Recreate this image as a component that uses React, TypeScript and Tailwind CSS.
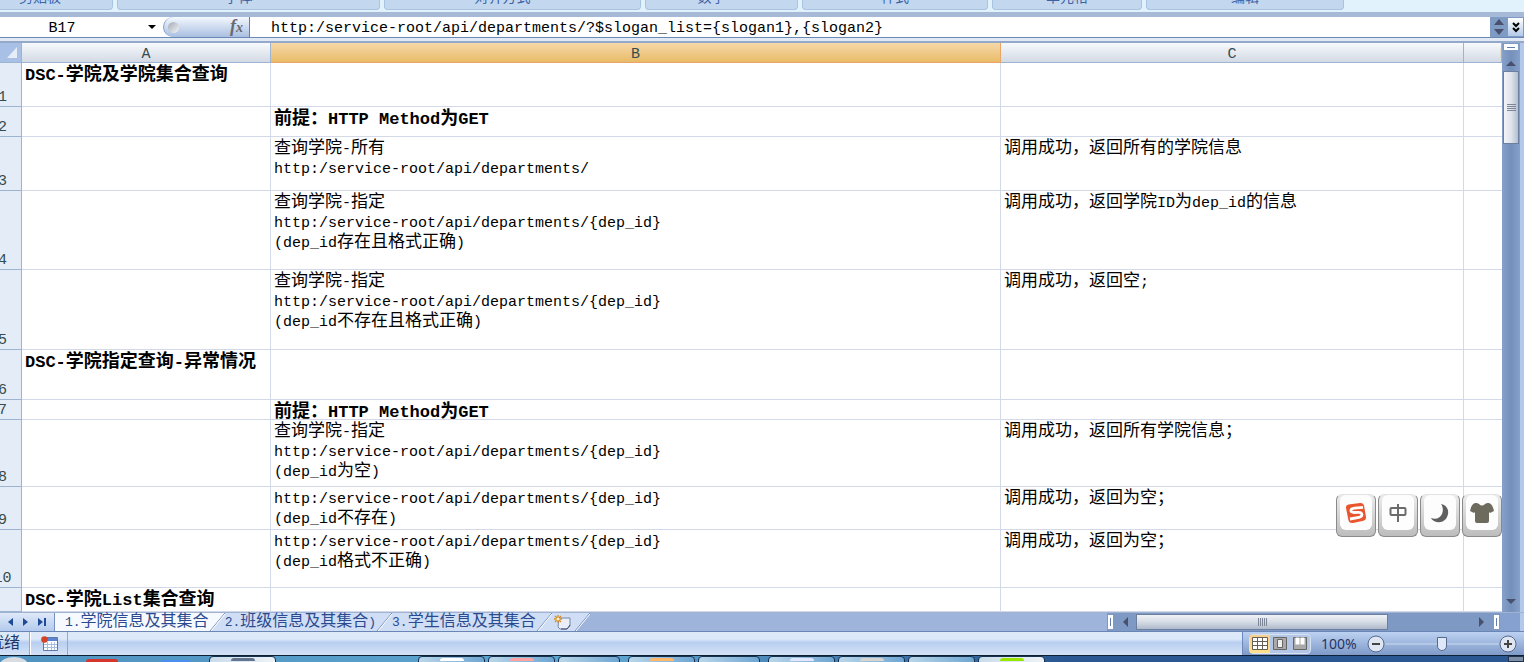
import { clsx } from "clsx";
import { useState } from "react";

interface SheetRow {
  id: number;
  height: string;
  a?: string;
  b?: string[];
  c?: string;
  bold?: boolean;
}

const URL_ALL = "http:/service-root/api/departments/";
const URL_BY_ID = "http:/service-root/api/departments/{dep_id}";

const ROWS: SheetRow[] = [
  { id: 1, height: "h-[43px]", a: "DSC-学院及学院集合查询", bold: true },
  { id: 2, height: "h-[29px]", b: ["前提：HTTP Method为GET"], bold: true },
  {
    id: 3,
    height: "h-[53px]",
    b: ["查询学院-所有", URL_ALL],
    c: "调用成功，返回所有的学院信息",
  },
  {
    id: 4,
    height: "h-[78px]",
    b: ["查询学院-指定", URL_BY_ID, "(dep_id存在且格式正确)"],
    c: "调用成功，返回学院ID为dep_id的信息",
  },
  {
    id: 5,
    height: "h-[79px]",
    b: ["查询学院-指定", URL_BY_ID, "(dep_id不存在且格式正确)"],
    c: "调用成功，返回空;",
  },
  { id: 6, height: "h-[49px]", a: "DSC-学院指定查询-异常情况", bold: true },
  { id: 7, height: "h-[19px]", b: ["前提：HTTP Method为GET"], bold: true },
  {
    id: 8,
    height: "h-[66px]",
    b: ["查询学院-指定", URL_BY_ID, "(dep_id为空)"],
    c: "调用成功，返回所有学院信息；",
  },
  {
    id: 9,
    height: "h-[42px]",
    b: [URL_BY_ID, "(dep_id不存在)"],
    c: "调用成功，返回为空；",
  },
  {
    id: 10,
    height: "h-[57px]",
    b: [URL_BY_ID, "(dep_id格式不正确)"],
    c: "调用成功，返回为空；",
  },
  { id: 11, height: "h-[23px]", a: "DSC-学院List集合查询", bold: true },
];

const RIBBON_GROUPS = [
  { name: "剪贴板", box: "w-[113px] pr-8 border-l-0 rounded-bl-none" },
  { name: "字体", box: "w-[263px] pr-5" },
  { name: "对齐方式", box: "w-[257px] pr-5" },
  { name: "数字", box: "w-[153px] pr-5" },
  { name: "样式", box: "w-[186px]" },
  { name: "单元格", box: "w-[150px]" },
  { name: "编辑", box: "w-[198px]" },
];

const SHEETS = ["1.学院信息及其集合", "2.班级信息及其集合)", "3.学生信息及其集合"];

const TASKS = [
  { id: "notes", box: "w-[67px] ml-[209px]", mark: "bg-slate-500" },
  { id: "browser", box: "w-[67px] ml-[142px]", mark: "bg-white" },
  { id: "media", box: "w-[67px] ml-[3px]", mark: "bg-red-300" },
  { id: "folder", box: "w-[62px] ml-[3px]", mark: "bg-transparent" },
  { id: "draw", box: "w-[67px] ml-[8px]", mark: "bg-orange-300" },
  { id: "files", box: "w-[62px] ml-[3px]", mark: "bg-transparent" },
  { id: "chat", box: "w-[67px] ml-[8px]", mark: "bg-indigo-100" },
  { id: "editor", box: "w-[67px] ml-[3px]", mark: "bg-stone-300" },
  { id: "mail", box: "w-[67px] ml-[3px]", mark: "bg-transparent" },
  { id: "sheet", box: "w-[67px] ml-[3px]", mark: "bg-lime-400", active: true },
];

function Mixed({
  text,
  latin = "text-[15px]",
}: {
  text: string;
  latin?: string;
}) {
  return (
    <>
      {text.split(/([\x20-\x7e]+)/).map((run, i) =>
        i % 2 ? (
          <span className={latin} key={i}>
            {run}
          </span>
        ) : (
          run
        ),
      )}
    </>
  );
}

function Ribbon() {
  return (
    <div className="flex h-3 gap-1 overflow-hidden bg-[#e1f2fd]">
      {RIBBON_GROUPS.map(({ name, box }) => (
        <div
          className={clsx(
            "flex h-[10px] items-end justify-center overflow-hidden rounded-b border border-t-0 border-[#a8c4e0] bg-[#c3d8ef] pb-[3px] text-[14px] leading-4 text-[#3c62a6]",
            box,
          )}
          key={name}
        >
          {name}
        </div>
      ))}
    </div>
  );
}

function FormulaBar() {
  return (
    <div className="flex h-[25px] border-t-[5px] border-[#a6b9d6] bg-white">
      <div className="flex w-[163px] items-center">
        <input
          aria-label="名称框"
          className="w-[124px] min-w-0 bg-transparent pt-1 text-center text-[15px] outline-none"
          defaultValue="B17"
        />
        <button aria-label="名称列表" className="ml-6" type="button">
          <svg className="h-1 w-2" viewBox="0 0 8 4">
            <path d="M0 0h8L4 4z" fill="#000" />
          </svg>
        </button>
      </div>
      <div className="flex w-[87px] items-center justify-between rounded-l-full border-r border-l border-r-[#5f7fae] border-l-[#7f9cc6] bg-linear-to-b from-[#f4f8fd] to-[#a9bfe1] pr-1.5 pl-1">
        <span className="size-[11px] rounded-full bg-linear-to-br from-[#a4abb6] to-[#f3f5f8]" />
        <button
          className="font-['Liberation_Serif',serif] text-[18px] leading-5 font-bold text-[#666a72] italic"
          type="button"
        >
          f<span className="text-[14px]">x</span>
        </button>
      </div>
      <input
        aria-label="编辑栏"
        className="min-w-0 flex-1 bg-transparent pt-1 pl-[21px] text-[15px] outline-none"
        defaultValue="http:/service-root/api/departments/?$slogan_list={slogan1},{slogan2}"
      />
      <div className="flex w-[17px] flex-col items-center justify-center gap-1 bg-[#7e9bc4]">
        <svg className="h-[16px] w-[10px]" viewBox="0 0 10 16">
          <path d="M5 0l5 6H0zM5 16l5-6H0z" fill="#48506e" />
        </svg>
      </div>
      <button
        aria-label="展开编辑栏"
        className="flex w-[17px] items-center justify-center border border-[#7e9bc4] bg-linear-to-b from-white to-[#b3c8e8]"
        type="button"
      >
        <svg className="h-[11px] w-2" fill="none" viewBox="0 0 8 11">
          <path
            d="M1 1l3 3 3-3M1 6l3 3 3-3"
            stroke="#000"
            strokeWidth="2"
          />
        </svg>
      </button>
    </div>
  );
}

function Grid() {
  const header =
    "h-5 overflow-hidden border-r border-b border-[#9cb4cf] bg-linear-to-b from-[#f7f9fc] to-[#d3dae5] p-0 pt-1 text-[15px] leading-[15px] font-normal text-[#364c4e]";
  const cell = "border-r border-b border-[#d3d9e8] p-0 align-top";
  return (
    <table className="w-full flex-1 table-fixed border-separate border-spacing-0 bg-white">
      <colgroup>
        <col className="w-[22px]" />
        <col className="w-[249px]" />
        <col />
        <col className="w-[463px]" />
        <col className="w-[38px]" />
      </colgroup>
      <thead>
        <tr>
          <th className="border-r border-b border-[#9cb4cf] bg-[#a9c0e6] p-0">
            <svg className="ml-[7px] h-[11px] w-[10px]" viewBox="0 0 10 11">
              <path d="M10 0v11H0z" fill="#e6edf7" />
            </svg>
          </th>
          <th className={header}>A</th>
          <th className="h-5 border-r border-b border-[#e9a568] bg-linear-to-b from-[#f6d8a8] to-[#e8bb67] p-0 pt-1 text-[15px] leading-[15px] font-normal text-[#364c4e]">
            B
          </th>
          <th className={header}>C</th>
          <th className={header}>
            <span className="ml-9 block text-left">D</span>
          </th>
        </tr>
      </thead>
      <tbody>
        {ROWS.map(({ id, height, a, b, c, bold }) => {
          const text = bold ? "text-[18px] font-bold" : "text-[17px]";
          const latin = bold ? "text-[17px]" : "text-[15px]";
          const content = clsx(
            "overflow-hidden pt-0.5 pl-[3px] leading-5 whitespace-nowrap",
            height,
            text,
          );
          return (
            <tr key={id}>
              <th className="border-r border-b border-[#9cb4cf] bg-[#e4ecf7] p-0 font-normal">
                <div
                  className={clsx(
                    "-ml-4 flex items-end justify-center text-[15px] leading-4 text-[#364c4e]",
                    height,
                  )}
                >
                  {id < 11 && id}
                </div>
              </th>
              <td className={cell}>
                <div className={content}>
                  {a && <Mixed latin={latin} text={a} />}
                </div>
              </td>
              <td className={cell}>
                <div className={content}>
                  {b?.map((line) => (
                    <p className="h-5" key={line}>
                      <Mixed latin={latin} text={line} />
                    </p>
                  ))}
                </div>
              </td>
              <td className={cell}>
                <div className={content}>
                  {c && <Mixed latin={latin} text={c} />}
                </div>
              </td>
              <td className="border-b border-[#d3d9e8] p-0" />
            </tr>
          );
        })}
      </tbody>
    </table>
  );
}

function VerticalScroll() {
  return (
    <div className="flex w-[22px] flex-col items-center border-r-4 border-[#b3c9ec] bg-linear-to-r from-[#86a0c9] via-[#7490bb] to-[#86a0c9]">
      <span className="flex h-2 w-4 items-center justify-center border border-[#7e9bc4] bg-white">
        <span className="h-px w-2 bg-[#5f7fae]" />
      </span>
      <button aria-label="向上滚动" className="h-5 pt-1" type="button">
        <svg className="h-[5px] w-[10px]" viewBox="0 0 10 5">
          <path d="M5 0l5 5H0z" fill="#48506e" />
        </svg>
      </button>
      <div className="flex h-[73px] w-4 flex-col items-center justify-center gap-px border border-[#6c7f9f] bg-linear-to-r from-[#f2f4f7] via-[#dfe4ec] to-[#b3bfd2]">
        <span className="h-px w-[9px] bg-[#7d8696]" />
        <span className="h-px w-[9px] bg-[#7d8696]" />
        <span className="h-px w-[9px] bg-[#7d8696]" />
        <span className="h-px w-[9px] bg-[#7d8696]" />
      </div>
      <button aria-label="向下滚动" className="mt-auto pb-2" type="button">
        <svg className="h-[5px] w-[10px]" viewBox="0 0 10 5">
          <path d="M0 0h10L5 5z" fill="#48506e" />
        </svg>
      </button>
    </div>
  );
}

function KeyCap({
  label,
  children,
}: {
  label: string;
  children: React.ReactNode;
}) {
  return (
    <button
      aria-label={label}
      className="h-[43px] w-10 rounded-md border border-[#8a8a8a] border-t-[#e2e2e2] bg-linear-to-b from-[#ececec] to-[#bdbdbd] px-[3px] pb-1.5"
      type="button"
    >
      <span className="flex h-full items-center justify-center rounded-md bg-[#fdfdfd]">
        {children}
      </span>
    </button>
  );
}

// 输入法状态栏
function ImeBar() {
  return (
    <div className="absolute right-[22px] bottom-[75px] flex gap-0.5">
      <KeyCap label="输入法">
        <svg className="size-[22px]" fill="none" viewBox="0 0 22 22">
          <path
            d="M1 6q-.5-3 2.500-3.500L15 1q3.500-.5 4 2.500L21 15q.5 3-2.500 3.700L8 21q-4 .5-4.600-3z"
            fill="#e8552f"
          />
          <path
            d="M18 5.300L9.500 6.200C4.500 6.800 5 10.600 9 10.500l4-.2c5-.2 5 4.200 1 5L5 17"
            stroke="#fff"
            strokeWidth="2.800"
          />
        </svg>
      </KeyCap>
      <KeyCap label="中文">
        <svg
          className="size-5"
          fill="none"
          stroke="#6b6b6b"
          strokeWidth="2"
          viewBox="0 0 20 20"
        >
          <rect height="7" rx="1" width="15" x="2.500" y="5" />
          <path d="M10 1v18" />
        </svg>
      </KeyCap>
      <KeyCap label="半角">
        <svg className="size-5" viewBox="0 0 20 20">
          <path
            d="M11 1c5 1 8 5 7 10-1 6-6 9-11 8-3-.5-5-2-6-4 5 2 9 0 11-4 1.500-4 1-7-1-10z"
            fill="#5f5f5f"
          />
        </svg>
      </KeyCap>
      <KeyCap label="皮肤">
        <svg className="h-[21px] w-6" viewBox="0 0 24 21">
          <path
            d="M5 1c2 0 3 0 4 1q3 3 6 0c1-1 2-1 4-1 3 1 4 4 5 8l-4 2-1-1v9q0 2-2 2H7q-2 0-2-2v-9l-1 1-4-2C1 5 2 2 5 1z"
            fill="#6d6b5e"
          />
        </svg>
      </KeyCap>
    </div>
  );
}

// 标签之间的斜边
function Slash({ left, right }: { left: string; right: string }) {
  return (
    <svg className="h-[18px] w-4 shrink-0" viewBox="0 0 16 18">
      <path d="M0 0h16L1 18H0z" fill={left} />
      <path d="M16 0v18H1z" fill={right} />
      <path d="M1 18L16 0" fill="none" stroke="#7690bd" />
      <path d="M2 18L16 1" fill="none" stroke="#fff" />
    </svg>
  );
}

function SheetTabs() {
  const [active, setActive] = useState(0);
  return (
    <div className="flex h-5 border-y border-t-[#a0b3d0] border-b-[#6a86b6] bg-[#9fb4da]">
      <div className="flex w-[55px] items-center gap-[10px] border-r border-[#7690bd] bg-linear-to-b from-[#dfe9f8] to-[#b4caed] pl-2">
        <button aria-label="上一个" type="button">
          <svg className="h-2 w-[5px]" viewBox="0 0 5 8">
            <path d="M5 0v8L0 4z" fill="#1f4a96" />
          </svg>
        </button>
        <button aria-label="下一个" type="button">
          <svg className="h-2 w-[5px]" viewBox="0 0 5 8">
            <path d="M0 0v8l5-4z" fill="#1f4a96" />
          </svg>
        </button>
        <button aria-label="最后一个" type="button">
          <svg className="h-2 w-[8px]" viewBox="0 0 8 8">
            <path d="M0 0v8l5-4zM6 0h2v8H6z" fill="#1f4a96" />
          </svg>
        </button>
      </div>
      {SHEETS.map((name, i) => (
        <div className="flex" key={name}>
          <button
            className={clsx(
              "text-[16px] leading-[18px] whitespace-nowrap text-[#2b4a8f]",
              i === 0 && "pl-[10px]",
              i === active ? "bg-[#f6f9fe]" : "bg-[#cfdef5]",
            )}
            onClick={() => setActive(i)}
            type="button"
          >
            <Mixed latin="text-[13px]" text={name} />
          </button>
          <Slash
            left={i === active ? "#f6f9fe" : "#cfdef5"}
            right={i + 1 === active ? "#f6f9fe" : "#cfdef5"}
          />
        </div>
      ))}
      <button
        aria-label="插入工作表"
        className="flex w-[22px] items-center justify-center bg-[#cfdef5]"
        type="button"
      >
        <svg className="h-[15px] w-[17px]" viewBox="0 0 17 15">
          <path d="M5 3h11v8l-3 3H6l-2-2z" fill="#e9eef8" stroke="#7c87a3" />
          <path d="M16 10l-3 4H7" fill="none" stroke="#3f4c78" />
          <path
            d="M4 0v8M0 4h8M1 1l6 6M7 1L1 7"
            stroke="#d98c22"
            strokeWidth="1.300"
          />
          <circle cx="4" cy="4" fill="#fff3c9" r="1.600" />
        </svg>
      </button>
      <Slash left="#cfdef5" right="#9fb4da" />
      <div className="ml-auto flex w-[417px] items-center bg-[#7e99c3]">
        <span className="flex h-4 w-[7px] items-center justify-center border border-[#7e99c3] bg-white">
          <span className="h-2 w-px bg-[#5f7fae]" />
        </span>
        <button
          aria-label="向左滚动"
          className="flex w-[22px] justify-center"
          type="button"
        >
          <svg className="h-[10px] w-[5px]" viewBox="0 0 5 10">
            <path d="M5 0v10L0 5z" fill="#48506e" />
          </svg>
        </button>
        <div className="flex h-4 w-[252px] items-center justify-center gap-px border border-[#6c7f9f] bg-linear-to-b from-[#f0f2f6] via-[#d6dce5] to-[#aeb9cb]">
          <span className="h-2 w-px bg-[#7d8696]" />
          <span className="h-2 w-px bg-[#7d8696]" />
          <span className="h-2 w-px bg-[#7d8696]" />
          <span className="h-2 w-px bg-[#7d8696]" />
          <span className="h-2 w-px bg-[#7d8696]" />
        </div>
        <button
          aria-label="向右滚动"
          className="ml-auto flex w-[17px] justify-center"
          type="button"
        >
          <svg className="h-[10px] w-[5px]" viewBox="0 0 5 10">
            <path d="M0 0v10l5-5z" fill="#48506e" />
          </svg>
        </button>
        <span className="ml-[3px] flex h-4 w-[7px] items-center justify-center border border-[#7e99c3] bg-white">
          <span className="h-2 w-px bg-[#5f7fae]" />
        </span>
        <span className="h-full w-6 border-r-4 border-[#b3c9ec] bg-[#86a0d0]" />
      </div>
    </div>
  );
}

function StatusBar() {
  const [zoom, setZoom] = useState(100);
  return (
    <div className="flex h-[23px] bg-linear-to-b from-[#dde9f9] from-30% via-[#b9cff0] via-45% to-[#d5e2f6] text-[#1f3566]">
      <div className="flex w-[30px] items-center overflow-hidden border-r border-[#8fa9d4]">
        <span className="-ml-3 text-[16px] leading-5 whitespace-nowrap">
          就绪
        </span>
      </div>
      <button
        aria-label="录制宏"
        className="flex w-[38px] items-center justify-center border-r border-l border-r-[#8fa9d4] border-l-white"
        type="button"
      >
        <svg className="h-[15px] w-[17px]" viewBox="0 0 17 15">
          <path d="M2.500 1.500h14v13h-14z" fill="#fff" stroke="#5f77a8" />
          <path d="M3 2h13v3H3z" fill="#5b83cf" />
          <path
            d="M3 8.500h13M3 11.500h13M6.500 6v8M10.500 6v8M13.500 6v8"
            stroke="#a9bde0"
          />
          <circle cx="3.500" cy="3.500" fill="#d2432a" r="3.300" />
        </svg>
      </button>
      <div className="ml-auto flex w-[282px] items-center border-l border-[#6c89bd] bg-linear-to-b from-[#bdd2f2] to-[#7f9ac8] pl-1.5">
        <div className="flex h-5 w-[62px] rounded-sm border border-[#d7e2f3] bg-[#b3c6e6]">
          <button
            aria-label="普通"
            className="flex flex-1 items-center justify-center bg-linear-to-b from-[#f6cf8f] to-[#ffe08a]"
            type="button"
          >
            <svg className="h-[13px] w-4" fill="none" viewBox="0 0 16 13">
              <path d="M.5.5h15v12H.5z" fill="#fff" stroke="#665f55" />
              <path
                d="M1 4.500h14M1 8.500h14M5.500 1v11M10.500 1v11"
                stroke="#665f55"
              />
            </svg>
          </button>
          <button
            aria-label="页面布局"
            className="flex flex-1 items-center justify-center"
            type="button"
          >
            <svg className="h-[13px] w-[14px]" viewBox="0 0 14 13">
              <path d="M.5.5h13v12H.5z" fill="#a9a9a9" stroke="#666" />
              <path d="M4.500 2.500h5v8h-5z" fill="#eee" stroke="#666" />
            </svg>
          </button>
          <button
            aria-label="分页预览"
            className="flex flex-1 items-center justify-center"
            type="button"
          >
            <svg className="h-[13px] w-[14px]" viewBox="0 0 14 13">
              <path d="M.5.5h13v12H.5z" fill="#a9a9a9" stroke="#666" />
              <path d="M2.500.5h4v7h-4zM7.500.5h4v7h-4z" fill="#fff" />
            </svg>
          </button>
        </div>
        <span className="ml-[10px] w-[46px] font-['Noto_Sans',sans-serif] text-[14px] leading-5">
          {zoom}%
        </span>
        <button aria-label="缩小" onClick={() => setZoom(zoom - 10)} type="button">
          <svg className="size-[18px]" viewBox="0 0 18 18">
            <circle cx="9" cy="9" fill="#dfe6f1" r="8" stroke="#56698f" />
            <path d="M5 9h8" stroke="#444" strokeWidth="2" />
          </svg>
        </button>
        <input
          aria-label="显示比例"
          className="h-4 w-[114px] appearance-none bg-linear-to-b from-transparent from-45% via-[#dce6f6] via-50% to-transparent to-55% [&::-webkit-slider-thumb]:h-[14px] [&::-webkit-slider-thumb]:w-[10px] [&::-webkit-slider-thumb]:appearance-none [&::-webkit-slider-thumb]:rounded-b-full [&::-webkit-slider-thumb]:border [&::-webkit-slider-thumb]:border-[#56698f] [&::-webkit-slider-thumb]:bg-[#dfe8f6]"
          max={190}
          min={10}
          onChange={(e) => setZoom(Number(e.target.value))}
          type="range"
          value={zoom}
        />
        <button aria-label="放大" onClick={() => setZoom(zoom + 10)} type="button">
          <svg className="size-[18px]" viewBox="0 0 18 18">
            <circle cx="9" cy="9" fill="#dfe6f1" r="8" stroke="#56698f" />
            <path d="M5 9h8M9 5v8" stroke="#444" strokeWidth="2" />
          </svg>
        </button>
      </div>
    </div>
  );
}

function Taskbar() {
  return (
    <div className="relative flex h-[7px] overflow-hidden border-t border-[#0e2036] bg-linear-to-r from-[#4f93c0] via-[#5ea6d2] via-40% to-[#2a5791] to-70%">
      <svg className="absolute left-0 h-1.5 w-[200px]" viewBox="0 0 200 6">
        <ellipse cx="14" cy="9" fill="#d9dde2" rx="14" ry="8" />
        <path d="M86 6q0-3 3-3h26q3 0 3 3z" fill="#d5352b" />
        <path d="M161 4h29v2h-29z" fill="#4a8ff0" />
      </svg>
      {TASKS.map(({ id, box, mark, active }) => (
        <button
          aria-label={id}
          className={clsx(
            "flex h-2 shrink-0 items-end justify-center rounded-t border border-[#17324f] pb-0.5",
            active || id === "notes"
              ? "bg-linear-to-r from-[#c9dcea] to-[#eef3f7]"
              : "bg-linear-to-r from-[#b9d6ea] to-[#6ea6d2]",
            box,
          )}
          key={id}
          type="button"
        >
          <span className={clsx("h-[3px] w-6 rounded-t", mark)} />
        </button>
      ))}
      <span className="ml-auto w-4 border border-[#20344f] bg-[#7d8ea6]" />
    </div>
  );
}

export default function App() {
  return (
    <div className="bg-white pr-2 font-['Liberation_Mono','Noto_Sans_CJK_SC',monospace] text-black">
      <Ribbon />
      <FormulaBar />
      <div className="h-1.5 border-t border-b-2 border-t-[#6c88b4] border-b-[#94a9c9] bg-[#e1e9f5]" />
      <div className="relative flex">
        <Grid />
        <VerticalScroll />
        <ImeBar />
      </div>
      <SheetTabs />
      <StatusBar />
      <Taskbar />
    </div>
  );
}
